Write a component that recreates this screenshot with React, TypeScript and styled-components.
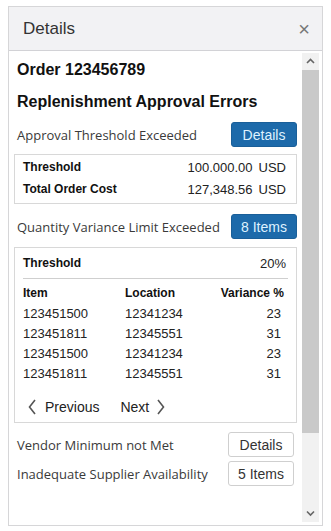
import styled, { createGlobalStyle } from "styled-components";

const GlobalStyle = createGlobalStyle`
  body {
    margin: 0;
    background: #ffffff;
    font-family: "Liberation Sans", Arial, sans-serif;
  }
`;

const Panel = styled.div`
  margin: 6px 8px 0 8px;
  width: 315px;
  height: 520px;
  box-sizing: border-box;
  border: 1px solid #d6d6d8;
  display: flex;
  flex-direction: column;
  background: #fff;
`;

const Header = styled.div`
  height: 44px;
  flex: none;
  box-sizing: border-box;
  background: #f2f2f4;
  border-bottom: 1px solid #d2d2d6;
  display: flex;
  align-items: center;
  justify-content: space-between;
  padding: 0 12px 0 14px;
`;

const Title = styled.div`
  font-size: 17px;
  color: #333;
`;

const Close = styled.span`
  font-size: 20px;
  color: #777;
  line-height: 1;
`;

const Body = styled.div`
  flex: 1;
  display: flex;
  min-height: 0;
`;

const Content = styled.div`
  flex: 1;
  padding: 9px 5px 0 5px;
  display: flex;
  flex-direction: column;
`;

const Heading = styled.div<{ $top?: number }>`
  font-weight: bold;
  font-size: 16px;
  line-height: 20px;
  color: #111;
  margin: ${(p) => p.$top ?? 0}px 0 0 3px;
`;

const SectionRow = styled.div<{ $top: number }>`
  display: flex;
  align-items: center;
  justify-content: space-between;
  height: 25px;
  margin-top: ${(p) => p.$top}px;
  padding-left: 3px;
`;

const Label = styled.span`
  font-family: "Open Sans", "Noto Sans", sans-serif;
  font-size: 13px;
  color: #3a3a3a;
`;

const Button = styled.button<{ $primary?: boolean }>`
  width: 66px;
  height: 25px;
  box-sizing: border-box;
  font-family: "Liberation Sans", Arial, sans-serif;
  font-size: 14px;
  border-radius: 3px;
  padding: 0;
  margin-right: ${(p) => (p.$primary ? 0 : 3)}px;
  background: ${(p) => (p.$primary ? "#1d6aaa" : "#ffffff")};
  color: ${(p) => (p.$primary ? "#dff2ff" : "#333")};
  border: 1px solid ${(p) => (p.$primary ? "#1a5f99" : "#cfcfcf")};
`;

const Card = styled.div<{ $top: number }>`
  margin-top: ${(p) => p.$top}px;
  border: 1px solid #d8d8d8;
  padding: 1px 10px 3px 8px;
`;

const KeyRow = styled.div<{ $h: number; $top?: number }>`
  display: flex;
  justify-content: space-between;
  align-items: center;
  height: ${(p) => p.$h}px;
  margin-top: ${(p) => p.$top ?? 0}px;
  font-size: 13px;
  color: #222;
`;

const Key = styled.span`
  font-weight: bold;
  font-size: 12px;
  color: #111;
`;

const Currency = styled.span`
  margin-left: 6px;
`;

const Divider = styled.div`
  height: 1px;
  background: #cfcfcf;
  margin: 5px -2px 4px 0;
`;

const Grid = styled.div`
  display: grid;
  grid-template-columns: 102px 1fr auto;
  grid-auto-rows: 20px;
  align-items: center;
  font-size: 13px;
  color: #222;
`;

const Th = styled.span<{ $right?: boolean }>`
  font-weight: bold;
  font-size: 12px;
  color: #111;
  text-align: ${(p) => (p.$right ? "right" : "left")};
  padding-right: ${(p) => (p.$right ? 2 : 0)}px;
`;

const Td = styled.span<{ $right?: boolean }>`
  text-align: ${(p) => (p.$right ? "right" : "left")};
  padding-right: ${(p) => (p.$right ? 5 : 0)}px;
`;

const Pager = styled.div`
  display: flex;
  align-items: center;
  height: 24px;
  margin-top: 12px;
  padding-left: 5px;
  font-size: 14px;
  color: #222;
`;

const PageLink = styled.span`
  display: flex;
  align-items: center;
  gap: 8px;
  margin-right: 21px;
`;

const Scrollbar = styled.div`
  width: 17px;
  margin: 2px 3px 3px 0;
  background: #f1f1f1;
  display: flex;
  flex-direction: column;
`;

const Arrow = styled.div`
  height: 17px;
  display: flex;
  align-items: center;
  justify-content: center;
  flex: none;
`;

const Thumb = styled.div`
  height: 363px;
  background: #c9c9c9;
  flex: none;
`;

const Track = styled.div`
  flex: 1;
`;

const Chevron = ({ dir }: { dir: "up" | "down" | "left" | "right" }) => {
  if (dir === "up" || dir === "down") {
    const d = dir === "up" ? "M1 5 L4.5 1.5 L8 5" : "M1 1.5 L4.5 5 L8 1.5";
    return (
      <svg width="9" height="7" viewBox="0 0 9 7">
        <path d={d} fill="none" stroke="#666" strokeWidth="1.6" />
      </svg>
    );
  }
  const d = dir === "left" ? "M7 1 L1.5 8 L7 15" : "M1 1 L6.5 8 L1 15";
  return (
    <svg width="9" height="16" viewBox="0 0 9 16">
      <path d={d} fill="none" stroke="#555" strokeWidth="1.6" />
    </svg>
  );
};

const items = [
  { item: "123451500", loc: "12341234", v: "23" },
  { item: "123451811", loc: "12345551", v: "31" },
  { item: "123451500", loc: "12341234", v: "23" },
  { item: "123451811", loc: "12345551", v: "31" },
];

export default function App() {
  return (
    <>
      <GlobalStyle />
      <Panel>
        <Header>
          <Title>Details</Title>
          <Close>×</Close>
        </Header>
        <Body>
          <Content>
            <Heading>Order 123456789</Heading>
            <Heading $top={12}>Replenishment Approval Errors</Heading>

            <SectionRow $top={10}>
              <Label>Approval Threshold Exceeded</Label>
              <Button $primary>Details</Button>
            </SectionRow>
            <Card $top={7}>
              <KeyRow $h={22}>
                <Key>Threshold</Key>
                <span>
                  100.000.00<Currency>USD</Currency>
                </span>
              </KeyRow>
              <KeyRow $h={22}>
                <Key>Total Order Cost</Key>
                <span>
                  127,348.56<Currency>USD</Currency>
                </span>
              </KeyRow>
            </Card>

            <SectionRow $top={10}>
              <Label>Quantity Variance Limit Exceeded</Label>
              <Button $primary>8 Items</Button>
            </SectionRow>
            <Card $top={8}>
              <KeyRow $h={20} $top={4}>
                <Key>Threshold</Key>
                <span>20%</span>
              </KeyRow>
              <Divider />
              <Grid>
                <Th>Item</Th>
                <Th>Location</Th>
                <Th $right>Variance %</Th>
                {items.map((r, i) => [
                  <Td key={`i${i}`}>{r.item}</Td>,
                  <Td key={`l${i}`}>{r.loc}</Td>,
                  <Td key={`v${i}`} $right>
                    {r.v}
                  </Td>,
                ])}
              </Grid>
              <Pager>
                <PageLink>
                  <Chevron dir="left" />
                  Previous
                </PageLink>
                <PageLink>
                  Next
                  <Chevron dir="right" />
                </PageLink>
              </Pager>
            </Card>

            <SectionRow $top={9}>
              <Label>Vendor Minimum not Met</Label>
              <Button>Details</Button>
            </SectionRow>
            <SectionRow $top={4}>
              <Label>Inadequate Supplier Availability</Label>
              <Button>5 Items</Button>
            </SectionRow>
          </Content>
          <Scrollbar>
            <Arrow>
              <Chevron dir="up" />
            </Arrow>
            <Thumb />
            <Track />
            <Arrow>
              <Chevron dir="down" />
            </Arrow>
          </Scrollbar>
        </Body>
      </Panel>
    </>
  );
}
